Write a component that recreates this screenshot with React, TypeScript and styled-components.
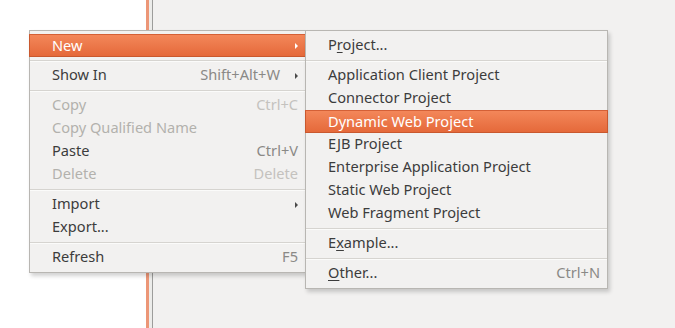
import React from "react";
import styled, { createGlobalStyle, css } from "styled-components";

const Global = createGlobalStyle`
  html, body { margin: 0; padding: 0; }
  body { width: 675px; height: 328px; overflow: hidden; font-family: "Noto Sans", "Open Sans", sans-serif; }
`;

const Page = styled.div`
  position: relative;
  display: flex;
  width: 675px;
  height: 328px;
  background: #f2f1f0;
`;

const WhitePane = styled.div`
  width: 146px;
  background: #ffffff;
`;

const Sash = styled.div`
  width: 3px;
  background: #ec9677;
`;

const Gap = styled.div`
  width: 3px;
  background: #ececea;
`;

const EditorEdge = styled.div`
  width: 1px;
  background: #9d9d9b;
`;

const EditorArea = styled.div`
  flex: 1;
  background: #f2f1f0;
`;

const Menu = styled.div<{ $left: number; $top: number; $width: number }>`
  position: absolute;
  left: ${(p) => p.$left}px;
  top: ${(p) => p.$top}px;
  width: ${(p) => p.$width}px;
  box-sizing: border-box;
  padding: 3px 0;
  background: #f2f1f0;
  border: 1px solid #b8b6b2;
  box-shadow: 2px 3px 4px rgba(0, 0, 0, 0.18);
  display: flex;
  flex-direction: column;
`;

const Row = styled.div<{ $active?: boolean; $disabled?: boolean }>`
  height: 23px;
  display: flex;
  align-items: center;
  box-sizing: border-box;
  padding: 0 8px 3px 23px;
  margin: 0 -1px;
  font-size: 14.6px;
  color: ${(p) => (p.$disabled ? "#b3b1ad" : "#3c3c3c")};
  ${(p) =>
    p.$active &&
    css`
      background: linear-gradient(#f3875a, #e5693a);
      border: 1px solid #c9582e;
      border-top-color: #d46036;
      padding-left: 22px;
      padding-right: 7px;
      padding-bottom: 2px;
      color: #ffffff;
    `}
`;

const Label = styled.span`
  flex: 1;
  white-space: nowrap;
`;

const Accel = styled.span<{ $disabled?: boolean; $active?: boolean }>`
  white-space: nowrap;
  color: ${(p) => (p.$active ? "#ffffff" : p.$disabled ? "#c4c2be" : "#8a8986")};
`;

const Arrow = styled.span<{ $active?: boolean }>`
  width: 0;
  height: 0;
  margin-left: 15px;
  margin-top: 3px;
  border-top: 3px solid transparent;
  border-bottom: 3px solid transparent;
  border-left: 3px solid ${(p) => (p.$active ? "#ffffff" : "#4a4a4a")};
`;

const Separator = styled.div`
  height: 7px;
  display: flex;
  flex-direction: column;
  justify-content: center;
  &::before {
    content: "";
    height: 1px;
    background: #d6d4d0;
  }
  &::after {
    content: "";
    height: 1px;
    background: #fbfbfa;
  }
`;

const Mn = styled.span`
  text-decoration: underline;
  text-underline-offset: 2px;
`;

type Item = {
  label: React.ReactNode;
  accel?: string;
  sub?: boolean;
  disabled?: boolean;
  active?: boolean;
};

const MenuRow = ({ label, accel, sub, disabled, active }: Item) => (
  <Row $active={active} $disabled={disabled}>
    <Label>{label}</Label>
    {accel && (
      <Accel $disabled={disabled} $active={active}>
        {accel}
      </Accel>
    )}
    {sub && <Arrow $active={active} />}
  </Row>
);

export default function App() {
  return (
    <>
      <Global />
      <Page>
        <WhitePane />
        <Sash />
        <Gap />
        <EditorEdge />
        <EditorArea />

        <Menu $left={29} $top={30} $width={277}>
          <MenuRow label="New" sub active />
          <Separator />
          <MenuRow label="Show In" accel="Shift+Alt+W" sub />
          <Separator />
          <MenuRow label="Copy" accel="Ctrl+C" disabled />
          <MenuRow label="Copy Qualified Name" disabled />
          <MenuRow label="Paste" accel="Ctrl+V" />
          <MenuRow label="Delete" accel="Delete" disabled />
          <Separator />
          <MenuRow label="Import" sub />
          <MenuRow label="Export..." />
          <Separator />
          <MenuRow label="Refresh" accel="F5" />
        </Menu>

        <Menu $left={305} $top={30} $width={303}>
          <MenuRow
            label={
              <>
                P<Mn>r</Mn>oject...
              </>
            }
          />
          <Separator />
          <MenuRow label="Application Client Project" />
          <MenuRow label="Connector Project" />
          <MenuRow label="Dynamic Web Project" active />
          <MenuRow label="EJB Project" />
          <MenuRow label="Enterprise Application Project" />
          <MenuRow label="Static Web Project" />
          <MenuRow label="Web Fragment Project" />
          <Separator />
          <MenuRow
            label={
              <>
                E<Mn>x</Mn>ample...
              </>
            }
          />
          <Separator />
          <MenuRow
            label={
              <>
                <Mn>O</Mn>ther...
              </>
            }
            accel="Ctrl+N"
          />
        </Menu>
      </Page>
    </>
  );
}
